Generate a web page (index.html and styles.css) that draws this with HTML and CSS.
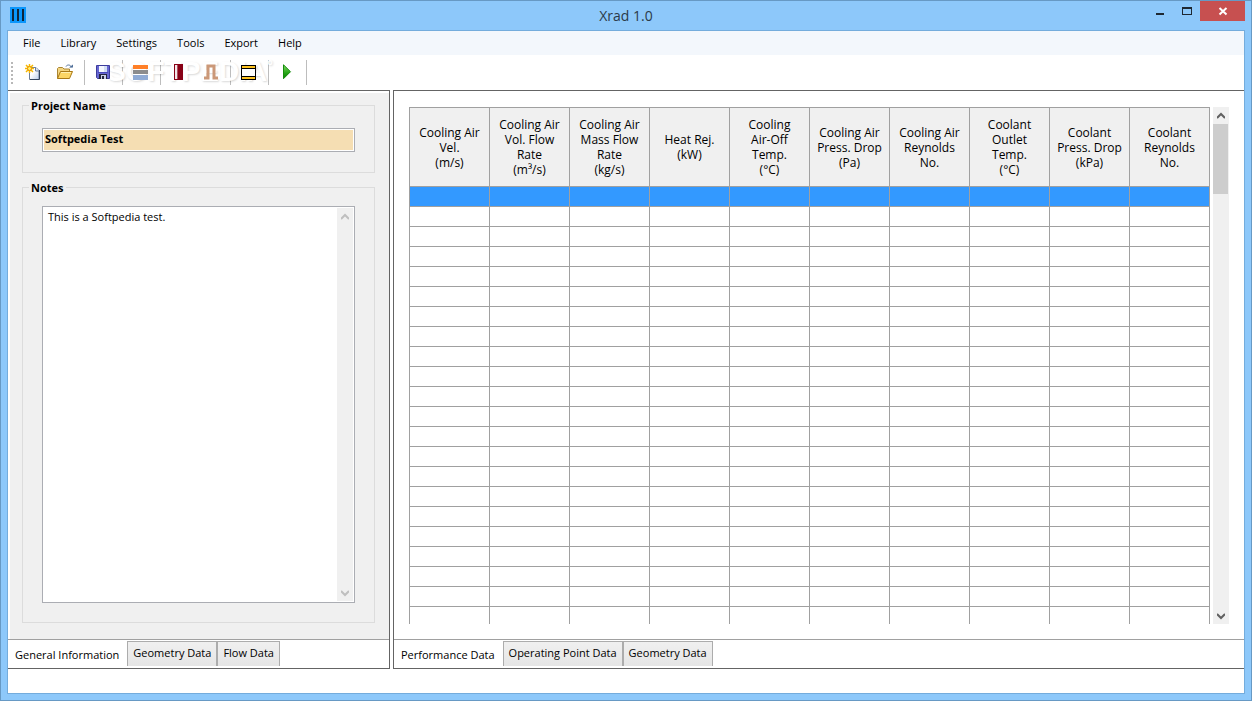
FILE: index.html
```html
<!DOCTYPE html>
<html lang="en">
<head>
<meta charset="utf-8">
<title>Xrad 1.0</title>
<link rel="stylesheet" href="styles.css">
</head>
<body>
<div class="window">
  <header class="titlebar">
    <svg class="app-icon" width="16" height="16" viewBox="0 0 16 16" aria-hidden="true"><path fill="#0a96fb" d="M0 0h16v16H0z"/><path fill="#10263c" d="M2 2h2v12H2zM7 2h2v12H7zM12 2h2v12h-2z"/></svg>
    <h1 class="title">Xrad 1.0</h1>
    <div class="window-controls">
      <button class="win-btn" aria-label="Minimize"><svg width="12" height="12" viewBox="0 0 12 12"><path fill="#1e2832" d="M2 8h8v2H2z"/></svg></button>
      <button class="win-btn" aria-label="Maximize"><svg width="12" height="12" viewBox="0 0 12 12"><path fill="#1e2832" fill-rule="evenodd" d="M1 2h10v8H1zM2 4v5h8V4z"/></svg></button>
      <button class="win-btn close" aria-label="Close"><svg width="12" height="12" viewBox="0 0 12 12"><path stroke="#fff" stroke-width="2" d="M2.500 3l7 6.500M9.500 3l-7 6.500"/></svg></button>
    </div>
  </header>

  <div class="client">
    <nav class="menu">
      <button>File</button><button>Library</button><button>Settings</button><button>Tools</button><button>Export</button><button>Help</button>
    </nav>

    <div class="toolbar" role="toolbar">
      <span class="watermark">SOFTPEDIA<sup>°</sup></span>
      <span class="grip"></span>
      <button class="tool" aria-label="New">
        <svg width="16" height="16" viewBox="0 0 16 16"><defs><linearGradient id="paper" x2="1" y2="1"><stop offset=".4" stop-color="#fff"/><stop offset="1" stop-color="#b9cdea"/></linearGradient></defs><path d="M4.500 3.500h6.500l3 3v9h-9.500z" fill="url(#paper)" stroke="#6c7f9c"/><path d="M14.500 6v9.500H5" fill="none" stroke="#34465f"/><path d="M10.500 3.500v3.500h3.500" fill="#dce8f8" stroke="#6c7f9c"/><path d="M4.500 0v9M0 4.500h9M1 1l7 7M8 1l-7 7" stroke="#f5b800" stroke-width="1.500"/><circle cx="4.500" cy="4.500" r="2" fill="#fff36b" stroke="#ed8d00"/></svg>
      </button>
      <button class="tool" aria-label="Open">
        <svg width="16" height="16" viewBox="0 0 16 16"><path d="M.5 14.500v-10l1-1h4l1.500 1.500h5.500v3" fill="#f4d680" stroke="#aa8532"/><path d="M.5 14.500l3-7h12l-3 7z" fill="#fcd665" stroke="#a97916"/><path d="M4 8.500h10" stroke="#fff0b0"/><path d="M9 2.500c1-2 4-2 5 0v1" fill="none" stroke="#52719a"/><path d="M12 3.500h4v-3z" fill="#52719a"/></svg>
      </button>
      <span class="sep"></span>
      <button class="tool" aria-label="Save">
        <svg width="16" height="16" viewBox="0 0 16 16"><path d="M1.500 1.500h13v13h-12l-1-1z" fill="#6767d2" stroke="#3c3c9c"/><path d="M4 2h8v6H4z" fill="#f4f7ff"/><path d="M9 2h3v6H9z" fill="#d1ddf5"/><path d="M4 10h8v5H4z" fill="#24273f"/><path d="M6 11h5v4H9v-3H7v3H6z" fill="#cbd0e8"/><path d="M3 8.500h10" stroke="#4949ba"/></svg>
      </button>
      <span class="sep"></span>
      <button class="tool" aria-label="Core">
        <svg width="16" height="16" viewBox="0 0 16 16"><path fill="#ff7f27" d="M0 1h15v4H0z"/><path fill="#8c8c8c" d="M0 6h15v4H0z"/><path fill="#90abd4" d="M0 11h15v5H0z"/></svg>
      </button>
      <span class="sep"></span>
      <button class="tool" aria-label="Tube">
        <svg width="16" height="16" viewBox="0 0 16 16"><path fill="#880015" d="M3 0h9v16H3z"/><path fill="#f3e6e8" d="M4 1h2v14H4z"/><path fill="#ae5060" d="M6 1h1v14H6z"/></svg>
      </button>
      <button class="tool" aria-label="Fin">
        <svg width="16" height="16" viewBox="0 0 16 16"><path d="M1 14h4V2h6v12h4" fill="none" stroke="#cb9878" stroke-width="3"/></svg>
      </button>
      <span class="sep"></span>
      <button class="tool" aria-label="Header tanks">
        <svg width="16" height="16" viewBox="0 0 16 16"><path fill="#000" d="M0 1h15v15H0z"/><path fill="#ffc420" d="M1 2h13v2H1zM1 13h13v2H1z"/><path fill="#fff" d="M1 5h13v7H1z"/></svg>
      </button>
      <span class="sep"></span>
      <button class="tool" aria-label="Run">
        <svg width="16" height="16" viewBox="0 0 16 16"><defs><linearGradient id="run" y2="1" x2="0"><stop stop-color="#83d965"/><stop offset=".6" stop-color="#23a414"/><stop offset="1" stop-color="#087c05"/></linearGradient></defs><path fill="url(#run)" stroke="#158c0c" d="M4.500.8v13.900l7-7z"/></svg>
      </button>
      <span class="sep"></span>
    </div>

    <main class="panes">
      <section class="pane pane-left">
        <div class="sheet">
          <fieldset class="group">
            <legend><label for="project">Project Name</label></legend>
            <input class="project" id="project" type="text" value="Softpedia Test">
          </fieldset>
          <fieldset class="group group-notes">
            <legend><label for="notes">Notes</label></legend>
            <div class="notes-box">
              <textarea id="notes">This is a Softpedia test.</textarea>
              <div class="scrollbar disabled">
                <button aria-label="Scroll notes up"><svg width="8" height="8" viewBox="0 0 8 8"><path d="M0 6l4-4 4 4"/></svg></button>
                <button aria-label="Scroll notes down"><svg width="8" height="8" viewBox="0 0 8 8"><path d="M0 2l4 4 4-4"/></svg></button>
              </div>
            </div>
          </fieldset>
        </div>
        <div class="tabs" role="tablist">
          <button class="tab active" role="tab" aria-selected="true">General Information</button>
          <button class="tab" role="tab">Geometry Data</button>
          <button class="tab" role="tab">Flow Data</button>
        </div>
      </section>

      <section class="pane pane-right">
        <div class="results">
          <div class="grid-view">
            <table>
              <thead>
                <tr>
                  <th>Cooling Air<br>Vel.<br>(m/s)</th>
                  <th>Cooling Air<br>Vol. Flow<br>Rate<br>(m³/s)</th>
                  <th>Cooling Air<br>Mass Flow<br>Rate<br>(kg/s)</th>
                  <th>Heat Rej.<br>(kW)</th>
                  <th>Cooling<br>Air-Off<br>Temp.<br>(°C)</th>
                  <th>Cooling Air<br>Press. Drop<br>(Pa)</th>
                  <th>Cooling Air<br>Reynolds<br>No.</th>
                  <th>Coolant<br>Outlet<br>Temp.<br>(°C)</th>
                  <th>Coolant<br>Press. Drop<br>(kPa)</th>
                  <th>Coolant<br>Reynolds<br>No.</th>
                </tr>
              </thead>
              <tbody id="rows"></tbody>
            </table>
          </div>
          <div class="scrollbar">
            <button aria-label="Scroll results up"><svg width="8" height="8" viewBox="0 0 8 8"><path d="M0 6l4-4 4 4"/></svg></button>
            <span class="thumb"></span>
            <button aria-label="Scroll results down"><svg width="8" height="8" viewBox="0 0 8 8"><path d="M0 2l4 4 4-4"/></svg></button>
          </div>
        </div>
        <div class="tabs" role="tablist">
          <button class="tab active" role="tab" aria-selected="true">Performance Data</button>
          <button class="tab" role="tab">Operating Point Data</button>
          <button class="tab" role="tab">Geometry Data</button>
        </div>
      </section>
    </main>
    <footer class="status"></footer>
  </div>
</div>
<script src="app.js"></script>
</body>
</html>
```

FILE: styles.css
```css
* { box-sizing: border-box; }

body {
  margin: 0;
  font: 11px/15px "Open Sans", "Noto Sans", sans-serif;
  color: #000;
}

button, input, textarea { font: inherit; color: inherit; border-radius: 0; }

button {
  margin: 0;
  padding: 0;
  border: 0;
  background: none;
}

svg { display: block; }

.window {
  display: flex;
  flex-direction: column;
  height: 100vh;
  padding: 0 6px 6px;
  border: 1px solid #6799c4;
  background: #8dc8fa;
}

/* Title bar */
.titlebar {
  display: grid;
  grid-template-columns: 1fr auto 1fr;
  flex: none;
  height: 29px;
}

.app-icon { margin: 6px 0 0 3px; }

.title {
  margin: 0;
  font-size: 14px;
  font-weight: 400;
  line-height: 29px;
  color: #2b3a48;
}

.window-controls {
  display: flex;
  justify-content: flex-end;
  align-items: flex-start;
}

.win-btn {
  display: grid;
  place-items: center;
  width: 27px;
  height: 20px;
}

.win-btn.close { width: 45px; background: #c75050; }

/* Client area */
.client {
  display: flex;
  flex: 1;
  flex-direction: column;
  min-height: 0;
  border: 1px solid #74acdc;
  background: #fff;
}

.menu {
  display: flex;
  gap: 20px;
  flex: none;
  height: 24px;
  padding: 0 15px 2px;
  background: #f3f7fc;
}

.toolbar {
  position: relative;
  display: flex;
  align-items: center;
  flex: none;
  height: 35px;
  padding-left: 3px;
}

.grip {
  width: 2px;
  height: 22px;
  margin-right: 4px;
  background: repeating-linear-gradient(#b8b8b8 0 2px, #fff 2px 4px);
}

.tool {
  position: relative;
  display: grid;
  place-items: center;
  width: 32px;
  height: 32px;
  padding-bottom: 1px;
}

.sep {
  width: 1px;
  height: 25px;
  margin: 0 2px 0 3px;
  background: #bdbdbd;
}

.watermark {
  position: absolute;
  left: 99px;
  top: 2px;
  font: 700 28px/30px "Liberation Sans", sans-serif;
  color: #fff;
  text-shadow: 1px 1px 2px rgba(0, 0, 0, .15);
  pointer-events: none;
}

.watermark sup { font-size: 14px; line-height: 0; }

/* Panes */
.panes {
  display: grid;
  grid-template-columns: 382px 1fr;
  gap: 3px;
  flex: 1;
  min-height: 0;
}

.pane {
  display: flex;
  flex-direction: column;
  min-width: 0;
  min-height: 0;
  border: solid #646464;
}

.pane-left { border-width: 1px 1px 1px 0; }
.pane-right { border-width: 1px 0 1px 1px; }

.sheet {
  display: flex;
  flex: 1;
  flex-direction: column;
  gap: 7px;
  min-height: 0;
  margin: 2px 0 0 2px;
  padding: 5px 14px 16px 12px;
  background: #f0f0f0;
}

.group {
  display: flex;
  flex-direction: column;
  min-width: 0;
  margin: 0;
  padding: 15px 19px 20px;
  border: 1px solid #dcdcdc;
}

.group-notes {
  flex: 1;
  min-height: 0;
  padding: 11px 19px 19px;
}

legend {
  margin-left: -13px;
  padding: 0 2px;
  font-weight: 700;
}

.project {
  width: 100%;
  height: 24px;
  padding: 0 2px 3px;
  border: 1px solid #abadb3;
  outline: 1px solid #fff;
  outline-offset: -2px;
  background: #f5deb3;
  font-weight: 700;
}

.notes-box {
  display: flex;
  flex: 1;
  min-height: 0;
  padding: 1px;
  border: 1px solid #abadb3;
  background: #fff;
}

textarea {
  flex: 1;
  min-width: 0;
  padding: 1px 4px;
  border: 0;
  outline: 0;
  resize: none;
  background: none;
}

/* Scroll bars */
.scrollbar {
  display: flex;
  flex: none;
  flex-direction: column;
  width: 16px;
  background: #f0f0f0;
}

.scrollbar button {
  display: grid;
  place-items: center;
  height: 17px;
}

.scrollbar button:last-child { margin-top: auto; }
.scrollbar path { fill: none; stroke: #606060; stroke-width: 2; }
.disabled path { stroke: #bfbfbf; }
.thumb { height: 70px; margin-right: 1px; background: #cdcdcd; }

/* Results grid */
.results {
  display: flex;
  flex: 1;
  gap: 3px;
  min-height: 0;
  padding: 16px 15px 15px;
}

.grid-view { flex: 1; min-width: 0; overflow: hidden; }

table {
  width: 100%;
  table-layout: fixed;
  border-spacing: 0;
  border: solid #a0a0a0;
  border-width: 1px 0 0 1px;
}

th, td {
  height: 20px;
  padding: 0;
  border: solid #a0a0a0;
  border-width: 0 1px 1px 0;
}

th {
  height: 79px;
  background: #f0f0f0;
  font-size: 12px;
  font-weight: 400;
  text-align: center;
  white-space: nowrap;
}

.selected td { background: #3399ff; }

/* Tabs */
.tabs {
  display: flex;
  flex: none;
  align-items: flex-start;
  height: 29px;
  border-top: 1px solid #a0a0a0;
}

.tab {
  height: 25px;
  padding: 0 5px 3px;
  border: solid #acacac;
  border-width: 1px 1px 0;
  margin-top: 1px;
  background: linear-gradient(#f0f0f0, #e5e5e5);
  white-space: nowrap;
}

.tab.active {
  height: 27px;
  margin-top: 0;
  padding: 2px 8px 0 7px;
  border-width: 0;
  background: #fff;
}

.status { flex: none; height: 24px; }
```

FILE: app.js
```js
const rows = document.getElementById('rows');
for (let r = 0; r < 22; r++) {
  const row = rows.insertRow();
  if (r === 0) row.className = 'selected';
  for (let c = 0; c < 10; c++) row.insertCell();
}
```
